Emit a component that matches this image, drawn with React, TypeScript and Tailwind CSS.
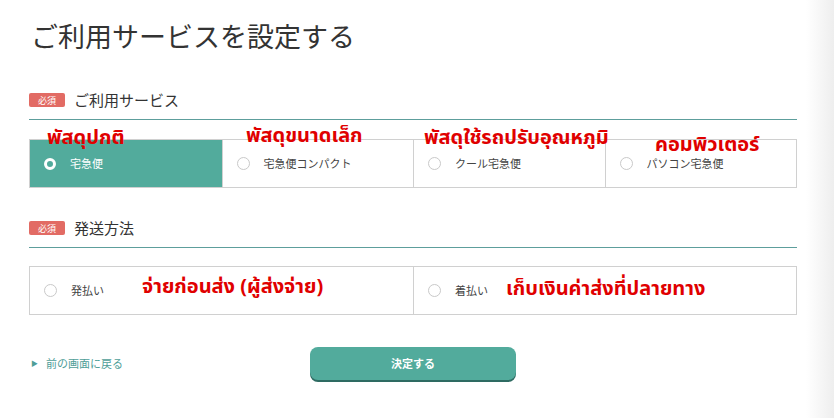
import { useState } from "react";

const SERVICES = ["宅急便", "宅急便コンパクト", "クール宅急便", "パソコン宅急便"];
const METHODS = ["発払い", "着払い"];

// red Thai notes laid over the form
const NOTES = [
  { text: "พัสดุปกติ", cls: "left-[47px] top-[129px]" },
  { text: "พัสดุขนาดเล็ก", cls: "left-[246px] top-[127px]" },
  { text: "พัสดุใช้รถปรับอุณหภูมิ", cls: "left-[424px] top-[129px]" },
  { text: "คอมพิวเตอร์", cls: "left-[655px] top-[136px]" },
  { text: "จ่ายก่อนส่ง (ผู้ส่งจ่าย)", cls: "left-[142px] top-[278px]" },
  { text: "เก็บเงินค่าส่งที่ปลายทาง", cls: "left-[506px] top-[280px]" },
];

function Radio({ checked }: { checked: boolean }) {
  return checked ? (
    <span className="block h-[12px] w-[12px] shrink-0 rounded-full border-[3px] border-white bg-[#52ab9c]" />
  ) : (
    <span className="block h-[13px] w-[13px] shrink-0 rounded-full border border-[#c9c9c9] bg-white" />
  );
}

function SectionHeader({ label }: { label: string }) {
  return (
    <div className="border-b border-[#5d9e9c] pb-[9px]">
      <div className="flex h-[20px] items-center gap-[9px]">
        <span className="flex h-[14px] w-[36px] items-center justify-center rounded-[2px] bg-[#e26b64] text-[9px] leading-none text-white">
          必須
        </span>
        <span className="text-[15px] text-[#333]">{label}</span>
      </div>
    </div>
  );
}

function Options({
  items,
  selected,
  onSelect,
  cols,
}: {
  items: string[];
  selected: number;
  onSelect: (i: number) => void;
  cols: string;
}) {
  return (
    <div className={`grid ${cols} h-[49px] border border-[#d0d0d0]`}>
      {items.map((item, i) => (
        <button
          key={item}
          onClick={() => onSelect(i)}
          className={`flex items-center gap-[14px] pl-[14px] text-left text-[11px] ${
            i > 0 ? "border-l border-[#d0d0d0]" : ""
          } ${selected === i ? "bg-[#52ab9c] text-white" : "bg-white text-[#444]"}`}
        >
          <Radio checked={selected === i} />
          {item}
        </button>
      ))}
    </div>
  );
}

export default function App() {
  const [service, setService] = useState(0);
  const [method, setMethod] = useState(-1);

  return (
    <div className="relative min-h-[418px] w-full bg-[linear-gradient(to_right,#ffffff_806px,#eeeeee_834px)] font-['Noto_Sans_CJK_JP','Noto_Sans',sans-serif]">
      <div className="w-[797px] pl-[29px] pt-[18px]">
        <h1 className="pl-[2px] text-[27px] font-normal leading-[36px] text-[#333]">
          ご利用サービスを設定する
        </h1>

        <div className="mt-[36px]">
          <SectionHeader label="ご利用サービス" />
        </div>
        <div className="mt-[19px]">
          <Options items={SERVICES} selected={service} onSelect={setService} cols="grid-cols-4" />
        </div>

        <div className="mt-[30px]">
          <SectionHeader label="発送方法" />
        </div>
        <div className="mt-[18px]">
          <Options items={METHODS} selected={method} onSelect={setMethod} cols="grid-cols-2" />
        </div>

        <div className="mt-[32px] grid grid-cols-[1fr_auto_1fr] items-center">
          <a href="#" className="flex items-center gap-[8px] pl-[2px] text-[11px] text-[#4f9e98]">
            <span className="text-[7px]">▶</span>
            前の画面に戻る
          </a>
          <button className="h-[33px] w-[206px] rounded-[8px] bg-[#52ab9c] text-[11px] font-bold text-white shadow-[0_2px_0_#2e6b62]">
            決定する
          </button>
          <div />
        </div>
      </div>

      {NOTES.map((n) => (
        <span
          key={n.text}
          className={`absolute ${n.cls} font-['Noto_Sans_Thai','Noto_Sans',sans-serif] text-[20px] font-bold leading-[18px] text-[#e00000]`}
        >
          {n.text}
        </span>
      ))}
    </div>
  );
}
